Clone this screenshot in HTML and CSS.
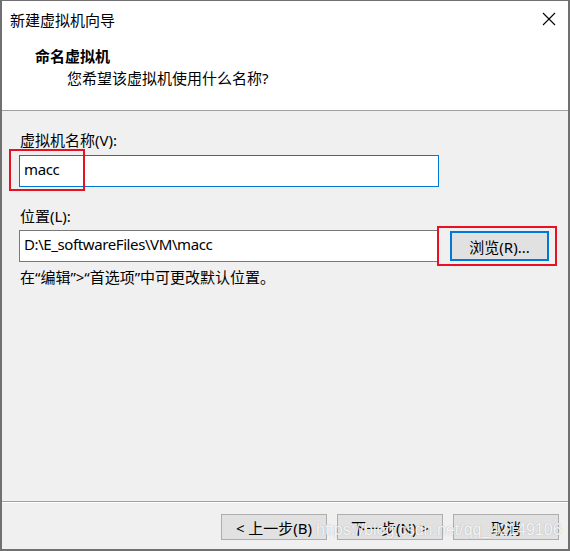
FILE: index.html
```html
<!DOCTYPE html>
<html lang="zh-CN">
<head>
<meta charset="utf-8">
<title>新建虚拟机向导</title>
<link rel="stylesheet" href="styles.css">
</head>
<body>
<div class="window">
  <div class="header">
    <div class="titlebar">
      <span class="title">新建虚拟机向导</span>
      <svg class="close" width="14" height="14" viewBox="0 0 14 14" aria-hidden="true">
        <path d="M1 1 L13 13 M13 1 L1 13" stroke="#000" stroke-width="1.1" fill="none"/>
      </svg>
    </div>
    <div class="heading">命名虚拟机</div>
    <div class="subheading">您希望该虚拟机使用什么名称?</div>
  </div>
  <div class="sep"></div>
  <div class="content">
    <div class="label">虚拟机名称(V):</div>
    <div class="field-wrap">
      <div class="input focused">macc</div>
      <div class="mark mark-name"></div>
    </div>
    <div class="label label-loc">位置(L):</div>
    <div class="loc-row">
      <div class="input loc">D:\E_softwareFiles\VM\macc</div>
      <div class="browse-wrap">
        <div class="btn browse">浏览(R)...</div>
        <div class="mark mark-browse"></div>
      </div>
    </div>
    <div class="hint">在“编辑”&gt;“首选项”中可更改默认位置。</div>
  </div>
  <div class="footer">
    <div class="btn nav">&lt; 上一步(B)</div>
    <div class="btn nav">下一步(N) &gt;</div>
    <div class="btn nav">取消</div>
    <div class="watermark">https://blog.csdn.net/qq_42149106</div>
  </div>
</div>
</body>
</html>
```

FILE: styles.css
```css
* { box-sizing: border-box; }
html, body { margin: 0; padding: 0; }
body {
  width: 570px;
  height: 551px;
  overflow: hidden;
  font-family: "Noto Sans", "Noto Sans CJK SC", sans-serif;
  font-size: 15px;
  color: #000;
}
.window {
  width: 570px;
  height: 551px;
  background: #f0f0f0;
  border: 2px solid #707070;
  border-top-width: 1px;
  display: flex;
  flex-direction: column;
  position: relative;
}
.header {
  background: #fff;
  height: 109px;
  padding: 9px 0 0 8px;
}
.titlebar {
  display: flex;
  align-items: center;
  justify-content: space-between;
  height: 20px;
  padding-right: 12px;
}
.title {
  font-family: "Noto Sans CJK SC", sans-serif;
  font-size: 15px;
  line-height: 20px;
  color: #000;
}
.close { display: block; margin-top: -2px; }
.heading {
  font-family: "Noto Sans CJK SC", sans-serif;
  font-weight: bold;
  font-size: 15px;
  line-height: 20px;
  margin-top: 16px;
  padding-left: 25px;
}
.subheading {
  font-family: "Noto Sans", "Noto Sans CJK SC", sans-serif;
  font-size: 15px;
  line-height: 20px;
  margin-top: 2px;
  padding-left: 57px;
}
.sep {
  height: 2px;
  border-top: 1px solid #a0a0a0;
  border-bottom: 1px solid #f0f0f0;
}
.content {
  flex: 1;
  padding: 18px 0 0 17px;
}
.label {
  line-height: 20px;
  padding-left: 1px;
}
.label-loc { margin-top: 19px; }
.field-wrap {
  position: relative;
  margin-top: 5px;
  width: 420px;
}
.input {
  height: 32px;
  background: #fff;
  border: 1px solid #7a7a7a;
  padding: 0 0 3px 4px;
  line-height: 27px;
  font-size: 15px;
  letter-spacing: -0.4px;
  white-space: nowrap;
}
.input.focused { border-color: #0078d7; }
.loc-row {
  display: flex;
  align-items: center;
  margin-top: 4px;
}
.input.loc { width: 419px; }
.browse-wrap {
  position: relative;
  margin-left: 12px;
}
.btn {
  background: #e1e1e1;
  border: 1px solid #adadad;
  display: flex;
  align-items: center;
  justify-content: center;
  font-size: 15px;
  white-space: nowrap;
}
.browse {
  width: 99px;
  height: 30px;
  border: 2px solid #0078d7;
}
.mark {
  position: absolute;
  border: 2px solid #e81123;
  pointer-events: none;
}
.mark-name { left: -10px; top: -6px; width: 76px; height: 42px; }
.mark-browse { left: -13px; top: -5px; width: 120px; height: 40px; }
.hint {
  margin-top: 5px;
  line-height: 20px;
  padding-left: 1px;
}
.footer {
  height: 48px;
  border-top: 1px solid #a0a0a0;
  box-shadow: inset 0 1px 0 #fff;
  display: flex;
  justify-content: flex-end;
  align-items: flex-start;
  gap: 10px;
  padding: 12px 9px 0 0;
  position: relative;
}
.nav {
  width: 106px;
  height: 26px;
}
.watermark {
  position: absolute;
  left: 314px;
  top: 18px;
  font-family: "Liberation Sans", Arial, sans-serif;
  font-size: 16px;
  line-height: 20px;
  color: rgba(255, 255, 255, 0.9);
  text-shadow: 0 0 1px rgba(110, 110, 110, 0.55);
  white-space: nowrap;
  pointer-events: none;
}
```
